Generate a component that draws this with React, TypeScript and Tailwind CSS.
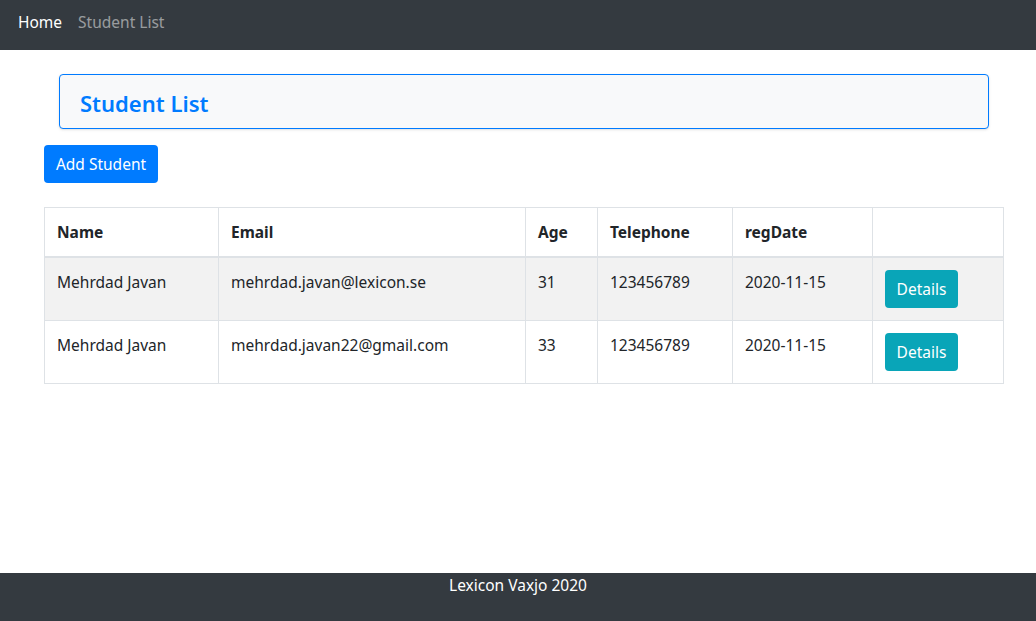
import React from "react";

interface Student {
  name: string;
  email: string;
  age: number;
  telephone: string;
  regDate: string;
}

const students: Student[] = [
  { name: "Mehrdad Javan", email: "mehrdad.javan@lexicon.se", age: 31, telephone: "123456789", regDate: "2020-11-15" },
  { name: "Mehrdad Javan", email: "mehrdad.javan22@gmail.com", age: 33, telephone: "123456789", regDate: "2020-11-15" },
];

const App: React.FC = () => {
  return (
    <div
      className="flex min-h-screen flex-col bg-white text-[15.5px] leading-6 text-[#212529]"
      style={{ fontFamily: '"Noto Sans", "Open Sans", sans-serif' }}
    >
      <nav className="flex h-[50px] items-start bg-[#343a40] px-[10px] pt-[10px]">
        <a className="px-2 text-white" href="#">Home</a>
        <a className="px-2 text-white/50" href="#">Student List</a>
      </nav>

      <main className="flex-1">
        <div className="ml-[44px] w-[960px]">
          <div className="mx-[15px] mt-[24px] flex h-[55px] items-center rounded border border-[#007bff] bg-[#f8f9fa] px-5 pt-[3px] shadow-sm">
            <h1 className="text-[22px] font-semibold text-[#007bff]">Student List</h1>
          </div>

          <button className="mt-4 h-[38px] w-[114px] rounded bg-[#007bff] text-white">Add Student</button>

          <table className="mt-6 w-[960px] table-fixed border-collapse border border-[#dee2e6]">
            <thead>
              <tr className="text-left">
                <th className="w-[174px] border border-b-2 border-[#dee2e6] p-3 font-bold">Name</th>
                <th className="w-[307px] border border-b-2 border-[#dee2e6] p-3 font-bold">Email</th>
                <th className="w-[72px] border border-b-2 border-[#dee2e6] p-3 font-bold">Age</th>
                <th className="w-[135px] border border-b-2 border-[#dee2e6] p-3 font-bold">Telephone</th>
                <th className="w-[140px] border border-b-2 border-[#dee2e6] p-3 font-bold">regDate</th>
                <th className="border border-b-2 border-[#dee2e6] p-3"></th>
              </tr>
            </thead>
            <tbody>
              {students.map((s, i) => (
                <tr key={i} className={i % 2 === 0 ? "bg-[#f2f2f2]" : "bg-white"}>
                  <td className="border border-[#dee2e6] p-3 align-top">{s.name}</td>
                  <td className="border border-[#dee2e6] p-3 align-top">{s.email}</td>
                  <td className="border border-[#dee2e6] p-3 align-top">{s.age}</td>
                  <td className="border border-[#dee2e6] p-3 align-top">{s.telephone}</td>
                  <td className="border border-[#dee2e6] p-3 align-top">{s.regDate}</td>
                  <td className="border border-[#dee2e6] p-3 align-top">
                    <button className="h-[38px] w-[73px] rounded bg-[#09a5b8] text-white">Details</button>
                  </td>
                </tr>
              ))}
            </tbody>
          </table>
        </div>
      </main>

      <footer className="h-[48px] bg-[#343a40] text-center text-white">Lexicon Vaxjo 2020</footer>
    </div>
  );
};

export default App;
